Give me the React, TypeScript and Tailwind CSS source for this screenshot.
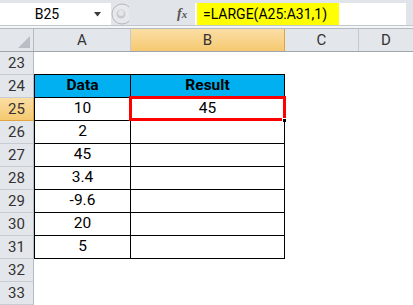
import React from "react";

const rows = [
  { n: 23, a: "", b: "", table: false, top: true },
  { n: 24, a: "Data", b: "Result", table: true, head: true },
  { n: 25, a: "10", b: "45", table: true, sel: true },
  { n: 26, a: "2", b: "", table: true },
  { n: 27, a: "45", b: "", table: true },
  { n: 28, a: "3.4", b: "", table: true },
  { n: 29, a: "-9.6", b: "", table: true },
  { n: 30, a: "20", b: "", table: true },
  { n: 31, a: "5", b: "", table: true },
  { n: 32, a: "", b: "", table: false },
  { n: 33, a: "", b: "", table: false },
];

export default function App() {
  return (
    <div
      className="w-[413px] h-[305px] overflow-hidden bg-white text-[#111]"
      style={{ fontFamily: 'Roboto, "Open Sans", sans-serif' }}
    >
      {/* Formula bar */}
      <div className="h-[29px] bg-[#e1e4e9] flex flex-col">
        <div className="h-[3px]" />
        <div className="h-[22px] flex">
          <div className="w-[111px] bg-white flex items-center">
            <div className="w-[94px] text-center text-[14px] leading-none text-black">B25</div>
            <svg width="8" height="5" viewBox="0 0 8 5">
              <path d="M0 0 H7 L3.5 4.5 Z" fill="#3a3a3a" />
            </svg>
          </div>
          <svg width="18" height="22" viewBox="0 0 18 22">
            <circle cx="11" cy="11" r="10" fill="#e6e8ec" stroke="#b3b8be" strokeWidth="1" />
            <circle cx="10" cy="11" r="4.5" fill="#c6cacf" />
            <circle cx="10" cy="10" r="3" fill="#e2e5e9" />
          </svg>
          <div className="w-[48px] flex items-center">
            <span
              className="ml-[48px] italic font-bold text-[#555] text-[14px] leading-none"
              style={{ fontFamily: '"Liberation Serif", serif' }}
            >
              f<span className="text-[11px]">x</span>
            </span>
          </div>
          <div className="ml-[18px] w-[211px] bg-white flex items-stretch">
            <div className="ml-[2px] w-[142px] bg-[#ffff00] flex items-center pl-[6px] text-[14px] leading-none text-black">
              =LARGE(A25:A31,1)
            </div>
          </div>
        </div>
        <div className="h-[1px] bg-[#c3c8cf]" />
        <div className="h-[2px] bg-[#f4f5f7]" />
        <div className="h-[1px] bg-[#b4bac1]" />
      </div>

      {/* Column headers */}
      <div className="h-[23px] flex border-b border-[#9ea5ad] bg-[#e3e6ea] text-[15px] text-[#333]">
        <div className="w-[34px] border-r border-[#b4bac1] relative">
          <svg width="12" height="12" viewBox="0 0 12 12" className="absolute right-[3px] bottom-[3px]">
            <path d="M12 0 V12 H0 Z" fill="#b9bec4" />
          </svg>
        </div>
        <div className="w-[97px] border-r border-[#c4c9cf] flex items-center justify-center">A</div>
        <div className="w-[154px] border-r border-[#e0a440] bg-gradient-to-b from-[#fbdea4] to-[#f5c970] flex items-center justify-center text-[#333]">
          B
        </div>
        <div className="w-[74px] border-r border-[#c4c9cf] flex items-center justify-center">C</div>
        <div className="flex-1 flex items-center justify-center">D</div>
      </div>

      {/* Rows */}
      {rows.map((r) => (
        <div key={r.n} className="h-[23px] flex text-[15.5px]">
          <div
            className={
              r.sel
                ? "w-[34px] h-[23px] border-r border-b border-r-[#e0a440] border-b-[#e0a440] bg-gradient-to-b from-[#fbdea4] to-[#f5c970] flex items-center justify-center text-[15px] text-[#333]"
                : "w-[34px] h-[23px] border-r border-b border-r-[#b4bac1] border-b-[#c7ccd2] bg-[#e3e6ea] flex items-center justify-center text-[15px] text-[#333]"
            }
          >
            {r.n}
          </div>
          <div
            className={
              (r.table
                ? "border-l border-b border-black "
                : r.top
                ? "border-b border-black "
                : "") +
              "w-[96px] h-[23px] flex items-center justify-center" +
              (r.head ? " bg-[#00b0f0] font-bold text-black" : " text-black")
            }
          >
            {r.a}
          </div>
          <div
            className={
              (r.table
                ? "border-l border-r border-b border-black w-[155px] "
                : r.top
                ? "border-b border-black w-[155px] "
                : "w-[155px] ") +
              "h-[23px] flex items-center justify-center relative" +
              (r.head ? " bg-[#00b0f0] font-bold text-black" : " text-black")
            }
          >
            {r.b}
            {r.sel && (
              <>
                <div className="absolute left-[-2px] right-[-2px] top-[-2px] bottom-[-1px] border-[3px] border-[#ff0000]" />
                <div className="absolute right-[-3px] bottom-[-3px] w-[5px] h-[5px] bg-black border border-white" />
              </>
            )}
          </div>
          <div className="flex-1" />
        </div>
      ))}
    </div>
  );
}
